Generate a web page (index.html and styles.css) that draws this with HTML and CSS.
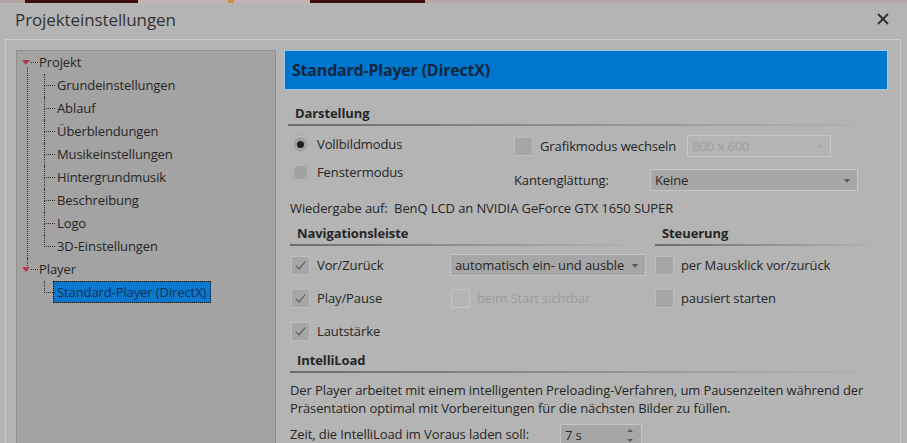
FILE: index.html
```html
<!DOCTYPE html>
<html lang="de">

<head>
    <meta charset="utf-8">
    <meta name="viewport" content="width=device-width, initial-scale=1.0">
    <title>Projekteinstellungen</title>

    <link rel="stylesheet" href="styles.css">
</head>

<body>

    <div class="strip"></div>

    <header class="titlebar">
        <span class="title">Projekteinstellungen</span>
        <svg class="close" width="12" height="12" viewBox="0 0 12 12">
            <path d="M1 1 L11 11 M11 1 L1 11" stroke="#2e2e2e" stroke-width="1.8" fill="none" />
        </svg>
    </header>

    <main class="dialog">

        <!-- linke Seite: Baum -->
        <nav class="tree">
            <ul class="root">
                <li class="node">
                    <span class="twisty"></span><span class="label">Projekt</span>
                    <ul class="children">
                        <li><span class="label">Grundeinstellungen</span></li>
                        <li><span class="label">Ablauf</span></li>
                        <li><span class="label">Überblendungen</span></li>
                        <li><span class="label">Musikeinstellungen</span></li>
                        <li><span class="label">Hintergrundmusik</span></li>
                        <li><span class="label">Beschreibung</span></li>
                        <li><span class="label">Logo</span></li>
                        <li><span class="label">3D-Einstellungen</span></li>
                    </ul>
                </li>
                <li class="node">
                    <span class="twisty"></span><span class="label">Player</span>
                    <ul class="children">
                        <li><span class="label selected">Standard-Player (DirectX)</span></li>
                    </ul>
                </li>
            </ul>
        </nav>

        <!-- rechte Seite -->
        <section class="pane">
            <h1 class="pane-head">Standard-Player (DirectX)</h1>

            <div class="pane-body">
                <h2 class="section-title first">Darstellung</h2>

                <div class="display">
                    <div class="col-a">
                        <div class="opt"><span class="radio checked"></span>Vollbildmodus</div>
                        <div class="opt"><span class="radio"></span>Fenstermodus</div>
                    </div>
                    <div class="col-b">
                        <div class="opt">
                            <span class="check"></span>Grafikmodus wechseln
                            <span class="select disabled mode">800 x 600<i class="arrow"></i></span>
                        </div>
                        <div class="opt">
                            <span class="field-label">Kantenglättung:</span>
                            <span class="select aa">Keine<i class="arrow"></i></span>
                        </div>
                    </div>
                </div>

                <div class="info">Wiedergabe auf:&nbsp; BenQ LCD an NVIDIA GeForce GTX 1650 SUPER</div>

                <div class="nav">
                    <div class="nav-main">
                        <h2 class="section-title">Navigationsleiste</h2>
                        <div class="rows">
                            <div class="nav-row">
                                <div class="opt"><span class="check on"></span>Vor/Zurück</div>
                                <span class="select auto">automatisch ein- und ausble<i class="arrow"></i></span>
                            </div>
                            <div class="nav-row">
                                <div class="opt"><span class="check on"></span>Play/Pause</div>
                                <div class="opt muted"><span class="check off"></span>beim Start sichtbar</div>
                            </div>
                            <div class="nav-row">
                                <div class="opt"><span class="check on"></span>Lautstärke</div>
                            </div>
                        </div>
                    </div>
                    <div class="nav-side">
                        <h2 class="section-title">Steuerung</h2>
                        <div class="rows">
                            <div class="opt"><span class="check"></span>per Mausklick vor/zurück</div>
                            <div class="opt"><span class="check"></span>pausiert starten</div>
                        </div>
                    </div>
                </div>

                <h2 class="section-title">IntelliLoad</h2>
                <p class="text">Der Player arbeitet mit einem intelligenten Preloading-Verfahren, um Pausenzeiten während der
                    Präsentation optimal mit Vorbereitungen für die nächsten Bilder zu füllen.</p>

                <div class="preload">
                    <span class="field-label long">Zeit, die IntelliLoad im Voraus laden soll:</span>
                    <span class="spin">7 s<i class="spin-up"></i><i class="spin-down"></i></span>
                </div>
            </div>
        </section>

    </main>

</body>

</html>
```

FILE: styles.css
```css
body {
    margin: 0;
    height: 443px;
    overflow: hidden;
    background-color: #b4b4b4;
    font-family: "Open Sans", "Noto Sans", sans-serif;
    font-size: 13px;
    letter-spacing: -0.1px;
    color: #262626;
}

.strip {
    height: 3px;
    background: linear-gradient(to right, #b0a3a4 0 25px, #3e0d0e 25px 138px, #c6b2b4 138px 228px, #d9884a 228px 234px, #c6b2b4 234px 310px, #3e0d0e 310px 425px, #b7a6a8 425px);
}

.titlebar {
    height: 32px;
    display: flex;
    align-items: center;
    justify-content: space-between;
    padding: 0 18px 0 15px;
}

.title {
    font-size: 17px;
    color: #323232;
}

.dialog {
    margin: 4px 6px 0 5px;
    height: 404px;
    box-sizing: border-box;
    border: 1px solid #cacaca;
    border-bottom: none;
    padding: 10px 12px 0 10px;
    display: flex;
    gap: 8px;
}

/* Baum */

.tree {
    width: 260px;
    flex: none;
    box-sizing: border-box;
    background-color: #a3a3a3;
    border: 1px solid #8f8f8f;
    border-bottom: none;
}

.tree ul {
    list-style: none;
    margin: 0;
    padding: 0;
}

.tree li {
    position: relative;
    line-height: 23px;
}

.root > li {
    padding-left: 22px;
}

.twisty {
    position: absolute;
    left: 5px;
    top: 9px;
    width: 0;
    height: 0;
    border-left: 4px solid transparent;
    border-right: 4px solid transparent;
    border-top: 5px solid #b23a4a;
}

.twisty::after {
    content: "";
    position: absolute;
    left: 5px;
    top: -3px;
    width: 7px;
    border-top: 1px dotted #303030;
}

.root > li:first-child::after {
    content: "";
    position: absolute;
    left: 10px;
    top: 16px;
    bottom: 0;
    border-left: 1px dotted #303030;
}

.root > li:last-child::after {
    content: "";
    position: absolute;
    left: 10px;
    top: 0;
    height: 8px;
    border-left: 1px dotted #303030;
}

.children {
    margin-left: 5px !important;
}

.children li {
    padding-left: 13px;
}

.children li::before {
    content: "";
    position: absolute;
    left: 0;
    top: 0;
    width: 10px;
    height: 11px;
    border-left: 1px dotted #303030;
    border-bottom: 1px dotted #303030;
}

.children li:not(:last-child)::after {
    content: "";
    position: absolute;
    left: 0;
    top: 11px;
    bottom: 0;
    border-left: 1px dotted #303030;
}

.selected {
    display: inline-block;
    margin-left: -4px;
    padding: 0 4px 0 3px;
    line-height: 20px;
    background-color: #0a78d0;
    border: 1px dotted #111;
    color: #17304d;
}

/* rechte Seite */

.pane {
    flex: 1;
}

.pane-head {
    margin: 0;
    height: 40px;
    box-sizing: border-box;
    border: 1px solid #9dc5e4;
    background-color: #0077cf;
    color: #13263b;
    font-size: 16px;
    font-weight: bold;
    line-height: 38px;
    padding-left: 7px;
    letter-spacing: -0.2px;
}

.pane-body {
    padding: 0 8px 0 6px;
}

.section-title {
    margin: 8px 0 0;
    height: 23px;
    box-sizing: border-box;
    padding-left: 7px;
    font-size: 13px;
    font-weight: bold;
    line-height: 21px;
    color: #262626;
    background: linear-gradient(to right, #6c6c6c, #b4b4b4) left bottom / 100% 2px no-repeat;
}

.section-title.first {
    margin: 13px 0 0 -2px;
}

.opt {
    display: flex;
    align-items: center;
    gap: 7px;
    white-space: nowrap;
}

.radio {
    width: 17px;
    height: 17px;
    flex: none;
    box-sizing: border-box;
    border-radius: 50%;
    background-color: #a1a1a1;
    border: 1px solid #c8c8c8;
    box-shadow: 0 0 0 1px #a9a9a9;
    margin-right: 1px;
    display: flex;
    align-items: center;
    justify-content: center;
}

.radio.checked::after {
    content: "";
    width: 7px;
    height: 7px;
    border-radius: 50%;
    background-color: #1e1e1e;
}

.check {
    width: 19px;
    height: 19px;
    flex: none;
    box-sizing: border-box;
    background-color: #a6a6a6;
    border: 1px solid #bdbdbd;
    position: relative;
}

.check.on::after {
    content: "";
    position: absolute;
    left: 6px;
    top: 2px;
    width: 4px;
    height: 9px;
    border-right: 1px solid #505050;
    border-bottom: 1px solid #505050;
    transform: rotate(40deg);
}

.check.off {
    background-color: transparent;
    border-color: #c3c3c3;
}

.muted {
    color: #9c9c9c;
}

.select {
    position: relative;
    display: inline-block;
    height: 22px;
    box-sizing: border-box;
    line-height: 20px;
    padding-left: 4px;
    background-color: #a6a6a6;
    border: 1px solid #c6c6c6;
    color: #262626;
}

.select .arrow {
    position: absolute;
    right: 7px;
    top: 9px;
    border-left: 3px solid transparent;
    border-right: 3px solid transparent;
    border-top: 4px solid #5a5a5a;
}

.select.disabled {
    background-color: transparent;
    color: #9e9e9e;
}

.select.disabled .arrow {
    border-top-color: #a9a9a9;
}

.display {
    display: flex;
}

.col-a {
    width: 222px;
    padding: 4px 0 0 2px;
}

.col-a .opt {
    height: 28px;
    gap: 7px;
}

.col-b {
    padding-top: 8px;
    display: flex;
    flex-direction: column;
    gap: 10px;
}

.col-b .opt {
    height: 24px;
}

.select.mode {
    width: 144px;
    margin-left: 4px;
}

.field-label {
    width: 129px;
}

.select.aa {
    width: 208px;
}

.info {
    margin-top: 6px;
    line-height: 20px;
}

.nav {
    display: flex;
    gap: 14px;
    margin-top: -3px;
}

.nav-main {
    width: 351px;
}

.nav-side {
    width: 225px;
}

.rows {
    margin-top: 8px;
    display: flex;
    flex-direction: column;
    gap: 11px;
}

.nav-row {
    display: grid;
    grid-template-columns: 160px 1fr;
    height: 22px;
    align-items: center;
    padding-left: 1px;
}

.nav-row .opt,
.nav-side .opt {
    height: 22px;
}

.select.auto {
    width: 196px;
    margin-left: -1px;
}

.text {
    margin: 8px 0 0;
    line-height: 18px;
}

.preload {
    margin-top: 7px;
    display: flex;
    align-items: center;
    height: 20px;
}

.field-label.long {
    width: 270px;
}

.spin {
    position: relative;
    width: 82px;
    height: 22px;
    box-sizing: border-box;
    line-height: 20px;
    padding-left: 4px;
    background-color: #a6a6a6;
    border: 1px solid #c6c6c6;
    margin-top: 2px;
}

.spin-up,
.spin-down {
    position: absolute;
    right: 8px;
    border-left: 3px solid transparent;
    border-right: 3px solid transparent;
}

.spin-up {
    top: 4px;
    border-bottom: 3px solid #5a5a5a;
}

.spin-down {
    top: 14px;
    border-top: 3px solid #5a5a5a;
}
```
